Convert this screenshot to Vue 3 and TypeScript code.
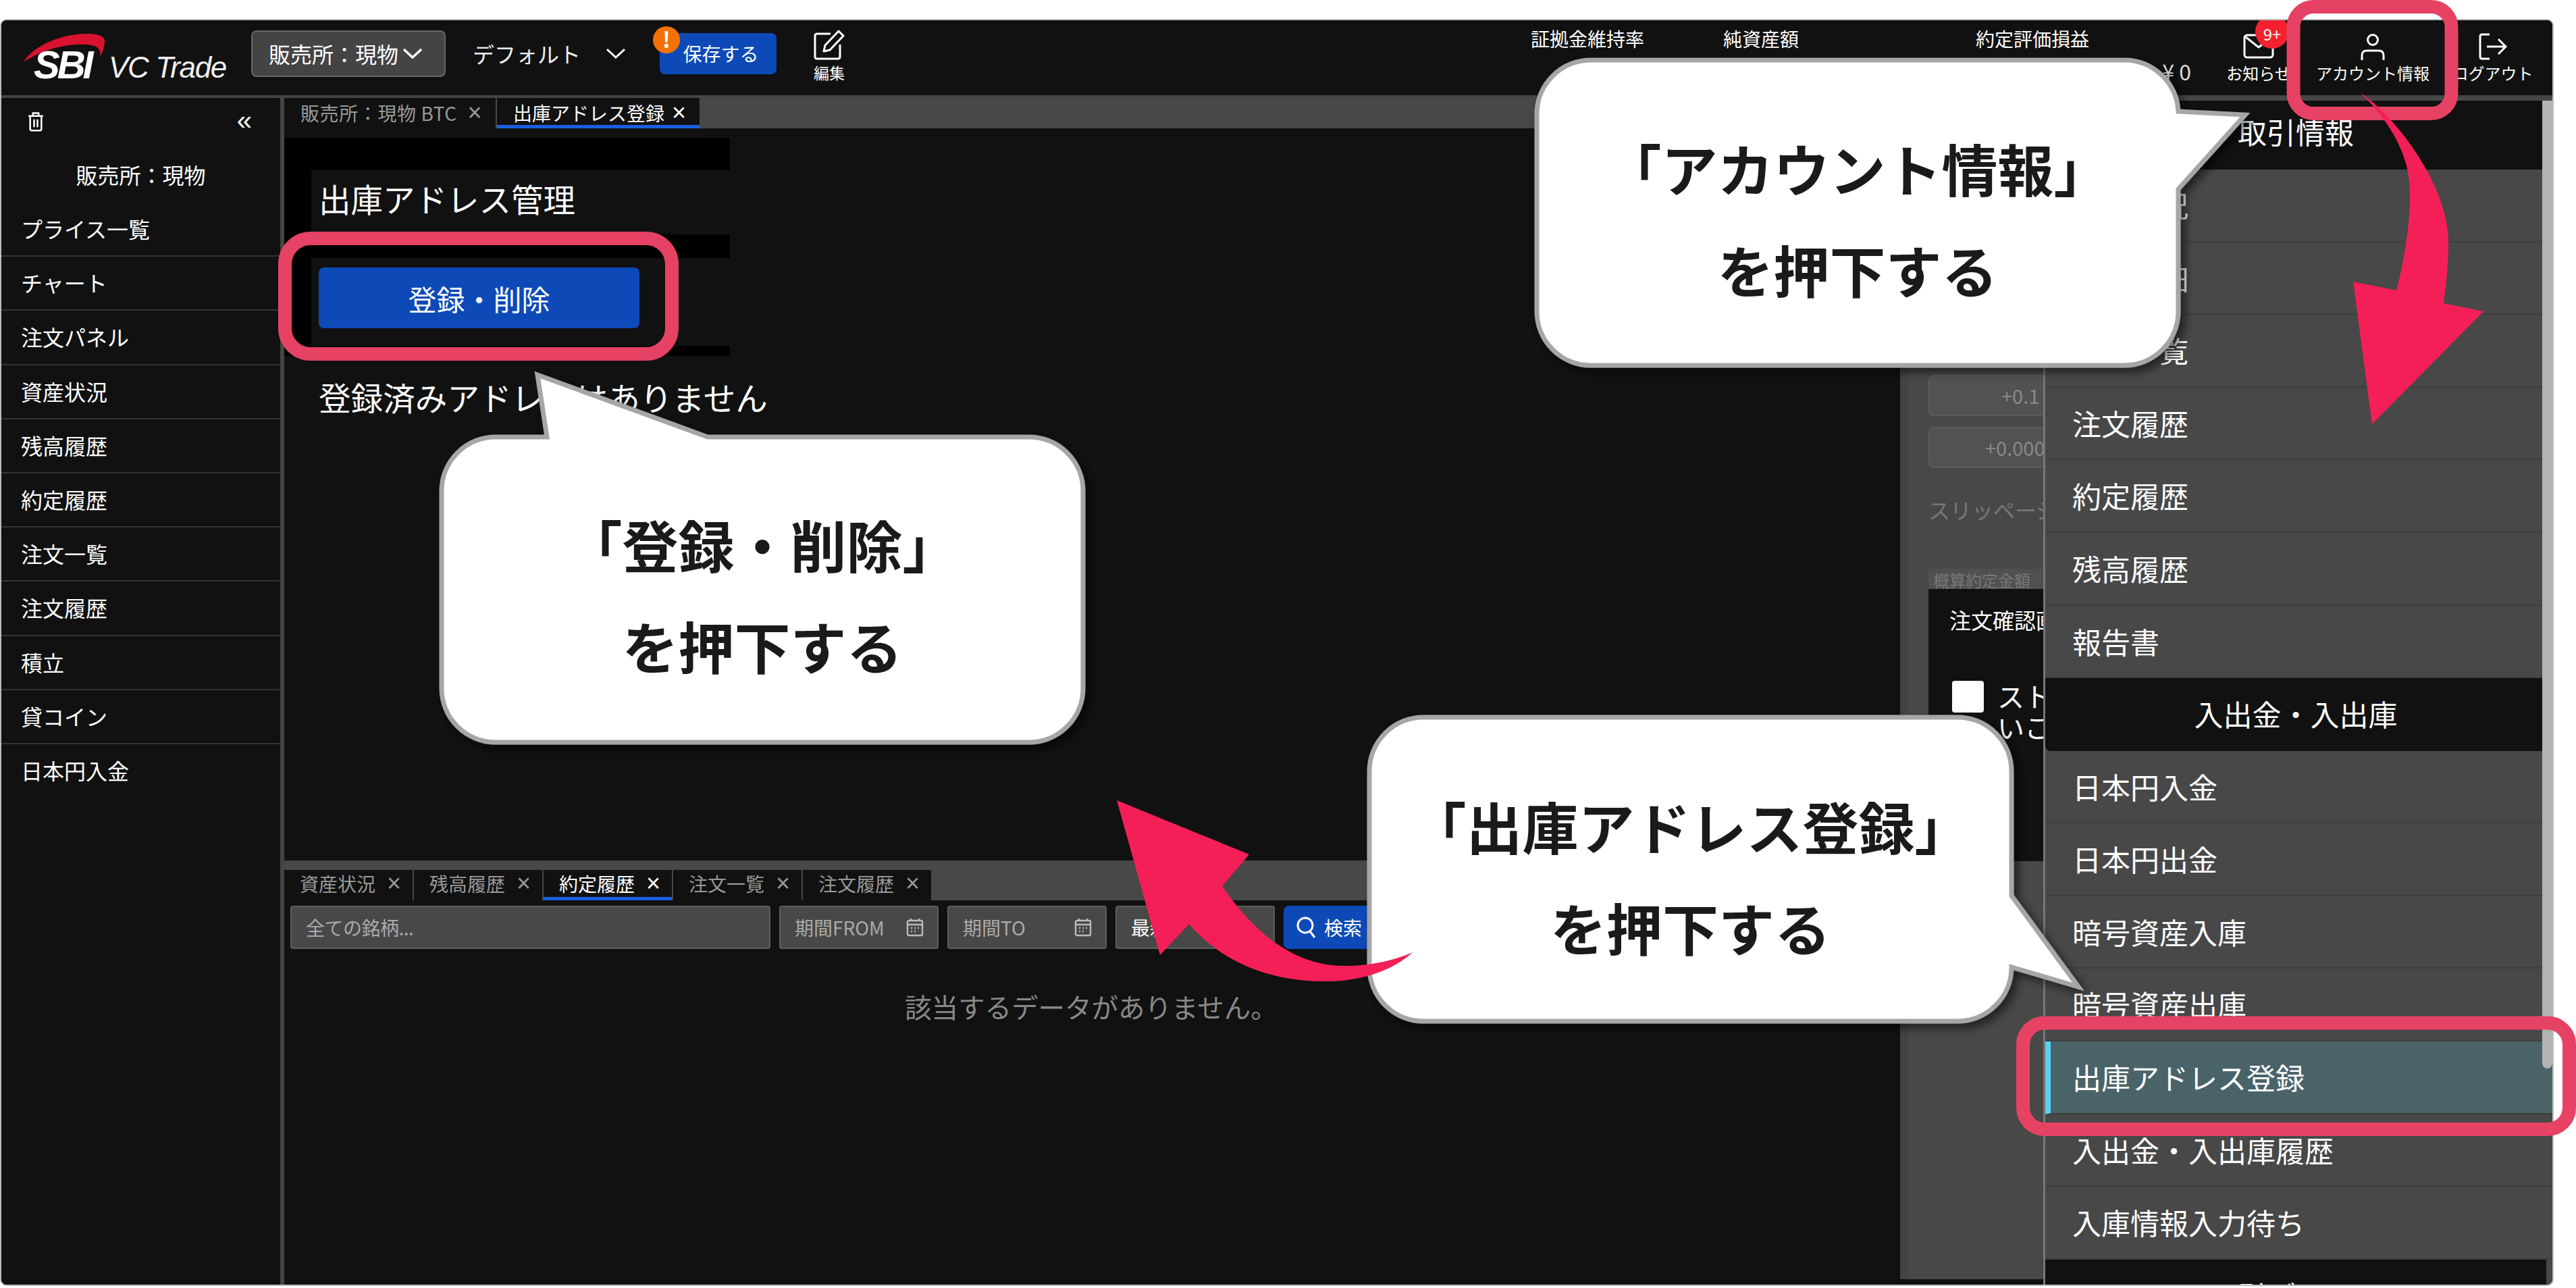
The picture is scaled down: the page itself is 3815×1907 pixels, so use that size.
<script setup lang="ts">
const sideItems: string[] = ['プライス一覧', 'チャート', '注文パネル', '資産状況', '残高履歴', '約定履歴', '注文一覧', '注文履歴', '積立', '貸コイン', '日本円入金']
const bottomTabs = [
  { name: '資産状況', active: false },
  { name: '残高履歴', active: false },
  { name: '約定履歴', active: true },
  { name: '注文一覧', active: false },
  { name: '注文履歴', active: false }
]
const tradeItems: string[] = ['資産状況', '取引明細', '注文一覧', '注文履歴', '約定履歴', '残高履歴', '報告書']
const cashItems = [
  { name: '日本円入金', active: false },
  { name: '日本円出金', active: false },
  { name: '暗号資産入庫', active: false },
  { name: '暗号資産出庫', active: false },
  { name: '出庫アドレス登録', active: true },
  { name: '入出金・入出庫履歴', active: false },
  { name: '入庫情報入力待ち', active: false }
]
const metrics = [
  { label: '証拠金維持率', cls: 'm1' },
  { label: '純資産額', cls: 'm2' },
  { label: '約定評価損益', cls: 'm3' }
]
</script>

<template>
  <div class="page">
    <div class="frame">
      <header class="top">
        <div class="logo">
          <svg class="swoosh" width="170" height="110" viewBox="0 0 170 110">
            <path d="M33 62C48 36 93 19 128 20C145 20 154 24 153 33C152 41 150 47 146 54C148 44 144 37 126 36C93 34 58 45 33 62Z" fill="#d8122f" />
          </svg>
          <span class="sbi">SBI</span>
          <span class="vc">VC Trade</span>
        </div>
        <div class="select">
          <span>販売所：現物</span>
          <svg width="30" height="16" viewBox="0 0 30 16"><path d="M2 2L15 14L28 2" fill="none" stroke="#fff" stroke-width="3.5" /></svg>
        </div>
        <div class="layout">
          <span>デフォルト</span>
          <svg width="30" height="16" viewBox="0 0 30 16"><path d="M2 2L15 14L28 2" fill="none" stroke="#fff" stroke-width="3" /></svg>
        </div>
        <button class="save">
          保存する
          <span class="alert">!</span>
        </button>
        <div class="edit">
          <svg width="46" height="46" viewBox="0 0 46 46" fill="none" stroke="#fff" stroke-width="3">
            <path d="M25 6H5Q2 6 2 9V40Q2 43 5 43H36Q39 43 39 40V22" />
            <path d="M37 2L44 9L24 30L15 32L17 23Z" stroke-linejoin="round" />
          </svg>
          <span>編集</span>
        </div>
        <div class="metrics">
          <div v-for="m in metrics" :key="m.label" class="metric" :class="m.cls">
            <span>{{ m.label }}</span>
            <b>¥ 0</b>
          </div>
        </div>
        <nav class="nav">
          <div class="nav-item n-mail">
            <svg width="46" height="40" viewBox="0 0 46 40" fill="none" stroke="#fff" stroke-width="3" stroke-linejoin="round">
              <rect x="2" y="3" width="42" height="33" rx="4" />
              <path d="M4 6L23 21L42 6" />
            </svg>
            <span>お知らせ</span>
            <em class="badge">9+</em>
          </div>
          <div class="nav-item n-user">
            <svg width="36" height="40" viewBox="0 0 36 40" fill="none" stroke="#fff" stroke-width="3">
              <circle cx="18" cy="10" r="7.5" />
              <path d="M2 40V33Q2 26 9 26H27Q34 26 34 33V40" />
            </svg>
            <span>アカウント情報</span>
          </div>
          <div class="nav-item n-out">
            <svg width="42" height="40" viewBox="0 0 42 40" fill="none" stroke="#fff" stroke-width="3">
              <path d="M16 2H5Q2 2 2 5V35Q2 38 5 38H16" />
              <path d="M12 20H40M29 9L40 20L29 31" />
            </svg>
            <span>ログアウト</span>
          </div>
        </nav>
      </header>

      <div class="body">
        <aside class="side">
          <div class="side-tools">
            <svg width="26" height="30" viewBox="0 0 30 36" fill="none" stroke="#fff" stroke-width="3">
              <path d="M2 8H28M10 8V3H20V8M5 8V31Q5 34 8 34H22Q25 34 25 31V8M12 14V28M18 14V28" />
            </svg>
            <span class="collapse">«</span>
          </div>
          <div class="side-title">販売所：現物</div>
          <div v-for="item in sideItems" :key="item" class="side-item">{{ item }}</div>
        </aside>

        <main class="main">
          <section class="upper">
            <div class="tabs-top">
              <div class="tab-top">販売所：現物 BTC<i>×</i></div>
              <div class="tab-top on">出庫アドレス登録<i>×</i></div>
            </div>
            <div class="addr">
              <h1 class="addr-title">出庫アドレス管理</h1>
              <div class="addr-action"><button class="addr-btn">登録・削除</button></div>
            </div>
            <p class="addr-empty">登録済みアドレスはありません</p>
          </section>
          <section class="lower">
            <div class="tabs-bottom">
              <div v-for="t in bottomTabs" :key="t.name" class="tab-bottom" :class="{ on: t.active }">{{ t.name }}<i>×</i></div>
            </div>
            <div class="filters">
              <div class="field f-wide">全ての銘柄...</div>
              <div class="field f-date">期間FROM
                <svg width="26" height="28" viewBox="0 0 26 28" fill="none" stroke="#bbb" stroke-width="2.4"><rect x="2" y="4" width="22" height="22" rx="2" /><path d="M2 10H24M7 1V5M19 1V5M7 15H9M12 15H14M17 15H19M7 20H9M12 20H14" /></svg>
              </div>
              <div class="field f-date">期間TO
                <svg width="26" height="28" viewBox="0 0 26 28" fill="none" stroke="#bbb" stroke-width="2.4"><rect x="2" y="4" width="22" height="22" rx="2" /><path d="M2 10H24M7 1V5M19 1V5M7 15H9M12 15H14M17 15H19M7 20H9M12 20H14" /></svg>
              </div>
              <div class="field f-date f-light">最新</div>
              <button class="search">
                <svg width="30" height="32" viewBox="0 0 30 32" fill="none" stroke="#fff" stroke-width="3"><circle cx="14" cy="13" r="11" /><path d="M21 22L28 31" /></svg>
                検索
              </button>
            </div>
            <p class="nodata">該当するデータがありません。</p>
          </section>
        </main>

        <aside class="panel">
          <div class="step">+0.1</div>
          <div class="step small">+0.0001</div>
          <div class="slip">スリッページ</div>
          <div class="estimate">概算約定金額</div>
          <div class="confirm">
            <div class="confirm-title">注文確認画面</div>
            <div class="confirm-row">
              <span class="check"></span>
              <span class="confirm-text">スト<br />いこ</span>
            </div>
          </div>
        </aside>

        <div class="menu">
          <div class="menu-head first">取引情報</div>
          <div v-for="m in tradeItems" :key="m" class="menu-item">{{ m }}</div>
          <div class="menu-head round">入出金・入出庫</div>
          <div v-for="m in cashItems" :key="m.name" class="menu-item" :class="{ on: m.active }">{{ m.name }}</div>
          <div class="menu-head">取引デモード</div>
          <div class="thumb"></div>
        </div>
      </div>
    </div>

    <svg class="marks" width="3815" height="1907" viewBox="0 0 3815 1907">
      <defs>
        <filter id="sh" x="-10%" y="-10%" width="120%" height="120%">
          <feDropShadow dx="7" dy="7" stdDeviation="7" flood-color="#000" flood-opacity="0.55" />
        </filter>
      </defs>
      <g fill="none" stroke="#e64264" stroke-width="20">
        <rect x="422" y="353" width="573" height="171" rx="38" />
        <rect x="3396.5" y="10" width="234" height="158" rx="30" />
        <rect x="2996" y="1514.5" width="809" height="157.5" rx="32" />
      </g>
      <g fill="#fff" stroke="#a6a6a6" stroke-width="7" filter="url(#sh)">
        <path d="M2356 89H3146A80 80 0 0 1 3226 165L3325 170L3226 280V461A80 80 0 0 1 3146 541H2356A80 80 0 0 1 2276 461V169A80 80 0 0 1 2356 89Z" />
        <path d="M734 647H810L796 555L1048 647H1524A80 80 0 0 1 1604 727V1019A80 80 0 0 1 1524 1099H734A80 80 0 0 1 654 1019V727A80 80 0 0 1 734 647Z" />
        <path d="M2108 1062H2899A80 80 0 0 1 2979 1142V1326L3078 1461L2979 1432A80 80 0 0 1 2899 1512H2108A80 80 0 0 1 2028 1432V1142A80 80 0 0 1 2108 1062Z" />
      </g>
      <g fill="#f51f57">
        <path d="M3495 137C3540 165 3626 270 3626 359C3626 395 3622 425 3619 449L3678 461L3513 628L3485 417L3549 430C3565 370 3575 290 3565 250C3555 205 3525 165 3495 137Z" />
        <path d="M1654 1185L1850 1265L1810 1312C1860 1385 1920 1430 1990 1430C2030 1430 2065 1422 2092 1410C2060 1440 2010 1453 1962 1453C1880 1453 1810 1425 1761 1368L1718 1414Z" />
      </g>
    </svg>

    <div class="note note-a"><span>「アカウント情報」</span><span>を押下する</span></div>
    <div class="note note-b"><span>「登録・削除」</span><span>を押下する</span></div>
    <div class="note note-c"><span>「出庫アドレス登録」</span><span>を押下する</span></div>
  </div>
</template>

<style>
html, body { margin: 0; background: #fff; }
</style>

<style scoped>
* { box-sizing: border-box; }
.page {
  position: relative;
  width: 3815px;
  height: 1907px;
  padding: 28px 33px 3px 0;
  background: #fff;
  overflow: hidden;
  font-family: "Noto Sans CJK JP", "Noto Sans", sans-serif;
  color: #fff;
}
.frame {
  display: flex;
  flex-direction: column;
  height: 100%;
  background: #111;
  border: 2px solid #bdbdbd;
  border-radius: 10px;
  overflow: hidden;
}

/* header */
.top {
  position: relative;
  display: flex;
  align-items: center;
  flex: 0 0 115px;
  border-bottom: 4px solid #444;
  background: #111;
}
.logo {
  position: relative;
  display: flex;
  align-items: flex-end;
  width: 370px;
  height: 111px;
  padding: 0 0 21px 48px;
  flex: none;
  font-family: "Liberation Sans", sans-serif;
  font-style: italic;
}
.swoosh { position: absolute; left: 0; top: 0; }
.sbi {
  position: relative;
  font-size: 58px;
  line-height: 48px;
  font-weight: 700;
  letter-spacing: -4px;
  width: 111px;
}
.vc { font-size: 44px; line-height: 40px; letter-spacing: -1.4px; color: #eee; }
.select {
  display: flex;
  align-items: center;
  justify-content: space-between;
  width: 288px;
  height: 69px;
  padding: 0 32px 0 24px;
  background: #444;
  border: 2px solid #666;
  border-radius: 8px;
  font-size: 32px;
  margin-top: -13px;
}
.layout {
  display: flex;
  align-items: center;
  width: 268px;
  margin-left: 40px;
  font-size: 32px;
  margin-top: -13px;
  color: #eee;
}
.layout span { width: 197px; }
.save {
  position: relative;
  width: 173px;
  height: 61px;
  margin-left: 9px;
  margin-top: -13px;
  background: #0d4ab8;
  color: #fff;
  border: 0;
  border-radius: 8px;
  font: inherit;
  font-size: 28px;
  padding: 0 0 0 8px;
}
.alert {
  position: absolute;
  left: -10px;
  top: -10px;
  width: 40px;
  height: 40px;
  border-radius: 50%;
  background: #f47204;
  font-size: 32px;
  line-height: 36px;
  font-weight: 700;
  text-align: center;
}
.edit {
  display: flex;
  flex-direction: column;
  align-items: center;
  width: 46px;
  margin-left: 55px;
  margin-top: -4px;
  font-size: 23px;
  line-height: 34px;
  white-space: nowrap;
}
.metrics { display: flex; margin-left: auto; margin-top: -12px; height: 96px; transform: translateX(-2px); }
.metric { display: flex; flex-direction: column; font-size: 28px; line-height: 50px; }
.metric b { font-weight: 400; font-size: 32px; line-height: 46px; text-align: right; color: #ddd; }
.m1 { width: 285px; }
.m2 { width: 374px; }
.m3 { width: 319px; }
.nav { display: flex; margin-left: 18px; height: 110px; align-self: flex-start; }
.nav-item {
  position: relative;
  display: flex;
  flex-direction: column;
  align-items: center;
  padding-top: 19px;
  font-size: 24px;
  white-space: nowrap;
}
.nav-item span { margin-top: 3px; line-height: 32px; }
.n-mail { width: 160px; }
.n-user { width: 178px; }
.n-out { width: 177px; }
.badge {
  position: absolute;
  left: 75px;
  top: -8px;
  width: 50px;
  height: 50px;
  border-radius: 50%;
  background: #f5212f;
  font-style: normal;
  font-size: 24px;
  line-height: 56px;
  text-align: center;
}

/* body */
.body { position: relative; display: flex; flex: 1; min-height: 0; }
.side { flex: 0 0 419px; border-right: 6px solid #444; background: #111; }
.side-tools {
  display: flex;
  align-items: center;
  justify-content: space-between;
  height: 74px;
  padding: 0 42px 4px 38px;
}
.collapse { font-size: 40px; line-height: 40px; font-family: "Liberation Sans", sans-serif; margin-top: -4px; }
.side-title { height: 81px; font-size: 32px; line-height: 78px; text-align: center; }
.side-item {
  height: 80.2px;
  padding-left: 29px;
  border-bottom: 2px solid #333;
  font-size: 32px;
  line-height: 76px;
}
.side-item:last-child { border-bottom: 0; }
.main { display: flex; flex-direction: column; flex: 0 0 2393px; }
.upper { flex: 0 0 1129px; background: #111; }
.tabs-top { display: flex; height: 45px; background: #484848; }
.tab-top {
  display: flex;
  justify-content: space-between;
  width: 313px;
  margin-right: 2px;
  padding: 0 20px 0 24px;
  background: #111;
  font-size: 28px;
  letter-spacing: 0.6px;
  line-height: 44px;
  color: #999;
}
.tab-top.on { width: 300px; color: #fff; border-bottom: 5px solid #1a5fe0; letter-spacing: 0; }
.tab-top i, .tab-bottom i { font-family: "Liberation Sans", sans-serif; font-style: normal; font-size: 36px; font-weight: 400; }
.addr {
  width: 660px;
  height: 323px;
  margin-top: 14px;
  padding: 48px 0 15px 40px;
  background: #000;
}
.addr-title {
  height: 95px;
  margin: 0;
  padding-left: 11px;
  background: #111;
  font-size: 47.5px;
  font-weight: 400;
  line-height: 84px;
}
.addr-action { height: 130px; margin-top: 35px; padding: 14px 0 0 11px; background: #111; }
.addr-btn {
  display: block;
  width: 475px;
  height: 90px;
  background: #0d4ab8;
  color: #fff;
  border: 0;
  border-radius: 8px;
  font: inherit;
  font-size: 42px;
}
.addr-empty { margin: 26px 0 0 51px; font-size: 47.6px; line-height: 70px; }
.lower { flex: 1; min-height: 0; }
.tabs-bottom { display: flex; height: 59px; padding-top: 14px; background: #484848; }
.tab-bottom {
  display: flex;
  justify-content: space-between;
  width: 190px;
  margin-right: 2px;
  padding: 0 17px 0 23px;
  background: #111;
  font-size: 28px;
  line-height: 40px;
  color: #999;
}
.tab-bottom.on { color: #fff; border-bottom: 5px solid #1a5fe0; }
.filters { display: flex; gap: 13px; padding: 8px 9px 0; }
.field {
  display: flex;
  align-items: center;
  justify-content: space-between;
  height: 64px;
  padding: 0 20px 0 21px;
  background: #484848;
  border: 2px solid #5e5e5e;
  border-radius: 4px;
  font-size: 28px;
  color: #aaa;
}
.f-wide { width: 711px; letter-spacing: -0.5px; }
.f-date { width: 236px; }
.f-light { color: #fff; }
.search {
  display: flex;
  align-items: center;
  gap: 12px;
  width: 140px;
  height: 64px;
  padding: 0 0 0 18px;
  background: #0d4ab8;
  color: #fff;
  border: 0;
  border-radius: 8px;
  font: inherit;
  font-size: 28px;
  white-space: nowrap;
}
.nodata { margin: 57px 0 0 919px; font-size: 39.5px; line-height: 56px; color: #888; white-space: nowrap; }

/* right panel */
.panel {
  flex: 1;
  display: flex;
  flex-direction: column;
  margin-bottom: 8px;
  padding: 410px 0 0 31px;
  background: #484848;
  border-left: 11px solid #434343;
  overflow: hidden;
  color: #888;
  white-space: nowrap;
}
.step {
  height: 61px;
  margin-bottom: 16px;
  padding-left: 106px;
  background: #525252;
  border: 2px solid #5c5c5c;
  border-radius: 8px;
  font-size: 29px;
  line-height: 56px;
}
.step.small { padding-left: 82px; }
.slip { margin-top: 16px; font-size: 32px; line-height: 58px; color: #777; }
.estimate {
  height: 30px;
  margin-top: 59px;
  padding-left: 7px;
  background: #505050;
  font-size: 24px;
  line-height: 34px;
  color: #777;
  overflow: hidden;
}
.confirm { height: 403px; padding: 22px 0 0 31px; background: #111; color: #fff; }
.confirm-title { font-size: 32px; line-height: 46px; }
.confirm-row { display: flex; gap: 20px; margin-top: 68px; margin-left: 4px; }
.check { flex: none; width: 47px; height: 47px; background: #fff; border-radius: 4px; }
.confirm-text { font-size: 40px; line-height: 46px; margin-top: -1px; }

/* menu */
.menu {
  position: absolute;
  top: 4px;
  right: 0;
  bottom: 0;
  width: 754px;
  background: #484848;
  border-left: 3px solid #777;
  overflow: hidden;
  font-size: 43px;
}
.menu-head {
  width: 742px;
  height: 102px;
  background: #111;
  text-align: center;
  line-height: 104px;
}
.menu-head.first { line-height: 90px; }
.menu-head.round { height: 107.5px; border-radius: 0 0 8px 8px; }
.menu-item {
  height: 107.6px;
  padding-left: 40px;
  border-bottom: 2px solid #3e3e3e;
  line-height: 104px;
}
.menu-item.on {
  background: #4a6369;
  border-left: 8px solid #5ad0f0;
  padding-left: 32px;
}
.thumb {
  position: absolute;
  top: 0;
  right: 0;
  width: 15px;
  height: 1433px;
  background: #b3b3b3;
  border-radius: 0 0 8px 8px;
}

/* annotations */
.marks { position: absolute; left: 0; top: 0; }
.note {
  position: absolute;
  display: flex;
  flex-direction: column;
  align-items: center;
  gap: 44px;
  font-size: 83px;
  line-height: 106px;
  font-weight: 700;
  color: #1a1a1a;
  white-space: nowrap;
}
.note-a { left: 2276px; width: 950px; top: 195px; }
.note-b { left: 654px; width: 950px; top: 752px; }
.note-c { left: 2028px; width: 951px; top: 1169px; }
</style>
